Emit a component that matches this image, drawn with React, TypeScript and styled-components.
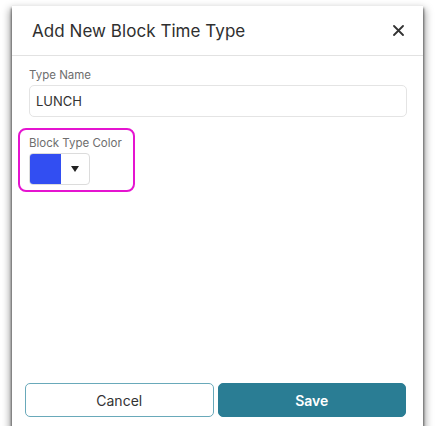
import React from "react";
import styled, { createGlobalStyle } from "styled-components";

const Global = createGlobalStyle`
  html, body { margin: 0; padding: 0; background: #ffffff; }
  body { font-family: Inter, "Noto Sans", sans-serif; }
  * { box-sizing: border-box; }
`;

const Page = styled.div`
  padding: 5px 0 0 12px;
`;

const Modal = styled.div`
  width: 411px;
  height: 421px;
  background: #fff;
  border-top: 1px solid #ececec;
  box-shadow: 0 4px 2px 1px rgba(0, 0, 0, 0.45), 0 6px 8px 2px rgba(0, 0, 0, 0.4);
  display: flex;
  flex-direction: column;
`;

const Header = styled.div`
  height: 50px;
  border-bottom: 1px solid #e2e2e2;
  display: flex;
  align-items: center;
  justify-content: space-between;
  padding: 0 19px 0 20px;
`;

const Title = styled.h2`
  margin: 0;
  font-size: 17px;
  font-weight: 400;
  color: #2f2f2f;
  letter-spacing: 0.05px;
`;

const CloseButton = styled.button`
  border: none;
  background: none;
  padding: 0;
  width: 11px;
  height: 11px;
  display: flex;
  cursor: pointer;
`;

const Body = styled.div`
  flex: 1;
  padding: 12px 16px 0 17px;
  display: flex;
  flex-direction: column;
`;

const Label = styled.label`
  display: block;
  font-size: 11.5px;
  line-height: 14px;
  color: #6e6e6e;
  margin-bottom: 3px;
`;

const TextInput = styled.div`
  height: 32px;
  border: 1px solid #e4e4e4;
  border-radius: 5px;
  display: flex;
  align-items: center;
  padding: 0 6px;
  font-size: 13px;
  color: #333;
`;

const Highlight = styled.div`
  margin: 11px 0 0 -11px;
  width: 117px;
  height: 64px;
  border: 2px solid #e514d0;
  border-radius: 8px;
  padding: 6px 0 0 9px;
`;

const Picker = styled.div`
  width: 61px;
  height: 32px;
  border: 1px solid #dcdcdc;
  border-radius: 4px;
  display: flex;
  overflow: hidden;
`;

const Swatch = styled.div<{ $color: string }>`
  width: 31px;
  background: ${(p) => p.$color};
`;

const Arrow = styled.div`
  flex: 1;
  display: flex;
  align-items: center;
  justify-content: center;
`;

const Footer = styled.div`
  display: flex;
  gap: 4px;
  padding: 0 17px 9px 13px;
`;

const Button = styled.button<{ $primary?: boolean }>`
  flex: 1;
  height: 34px;
  border-radius: 5px;
  font-family: Inter, "Noto Sans", sans-serif;
  font-size: 14px;
  font-weight: ${(p) => (p.$primary ? 600 : 400)};
  color: ${(p) => (p.$primary ? "#ffffff" : "#333333")};
  background: ${(p) => (p.$primary ? "#2a7d94" : "#ffffff")};
  border: 1px solid ${(p) => (p.$primary ? "#2a7d94" : "#69a9ba")};
  cursor: pointer;
`;

export default function App() {
  return (
    <>
      <Global />
      <Page>
        <Modal>
          <Header>
            <Title>Add New Block Time Type</Title>
            <CloseButton aria-label="Close">
              <svg width="11" height="11" viewBox="0 0 11 11">
                <path d="M1 1 L10 10 M10 1 L1 10" stroke="#333" strokeWidth="1.8" strokeLinecap="round" />
              </svg>
            </CloseButton>
          </Header>
          <Body>
            <Label>Type Name</Label>
            <TextInput>LUNCH</TextInput>
            <Highlight>
              <Label>Block Type Color</Label>
              <Picker>
                <Swatch $color="#324ef2" />
                <Arrow>
                  <svg width="8" height="6" viewBox="0 0 8 6">
                    <path d="M0 0 L8 0 L4 6 Z" fill="#222" />
                  </svg>
                </Arrow>
              </Picker>
            </Highlight>
          </Body>
          <Footer>
            <Button>Cancel</Button>
            <Button $primary>Save</Button>
          </Footer>
        </Modal>
      </Page>
    </>
  );
}
